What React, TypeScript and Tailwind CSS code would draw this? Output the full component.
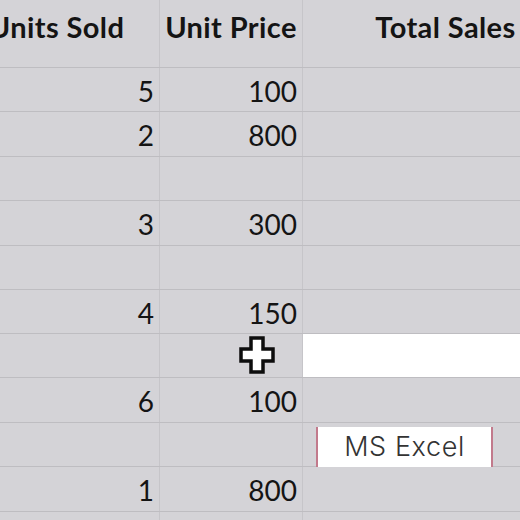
const rows = [
  { h: 'h-[44px]', units: '5', price: '100' },
  { h: 'h-[45px]', units: '2', price: '800' },
  { h: 'h-[44px]', units: '', price: '' },
  { h: 'h-[45px]', units: '3', price: '300' },
  { h: 'h-[44px]', units: '', price: '' },
  { h: 'h-[44px]', units: '4', price: '150' },
  { h: 'h-[44px]', units: '', price: '', selected: true },
  { h: 'h-[45px]', units: '6', price: '100' },
  { h: 'h-[44px]', units: '', price: '' },
  { h: 'h-[45px]', units: '1', price: '800' },
  { h: 'h-[44px]', units: '', price: '' },
];

const Cursor = () => (
  <svg width="38" height="40" viewBox="0 0 38 40" className="absolute left-[238px] top-[335px]">
    <path
      d="M13 3 H25 V14 H35 V26 H25 V37 H13 V26 H3 V14 H13 Z"
      fill="#fff"
      stroke="#0d0d0d"
      strokeWidth="3.5"
      strokeLinejoin="miter"
    />
  </svg>
);

export default function App() {
  return (
    <div className="relative w-[520px] h-[520px] overflow-hidden bg-[#d4d3d7] text-[#141414] font-['Lato',sans-serif]">
      <div className="ml-[-46px] w-[640px]">
        {/* header */}
        <div className="flex h-[68px] border-b border-[#bebdc1] text-[29px] font-bold tracking-[0.4px]">
          <div className="w-[206px] border-r border-[#c6c5c9] flex justify-center pt-[5px]">Units Sold</div>
          <div className="w-[143px] border-r border-[#c6c5c9] flex justify-center pt-[5px]">Unit Price</div>
          <div className="w-[285px] flex justify-center pt-[5px]">Total Sales</div>
        </div>

        {rows.map((r, i) => (
          <div key={i} className={`flex ${r.h} border-b border-[#bebdc1] text-[28px]`}>
            <div className="w-[206px] border-r border-[#c6c5c9] flex items-center justify-end pr-[5px] pt-[2px]">
              {r.units}
            </div>
            <div className="w-[143px] border-r border-[#c6c5c9] flex items-center justify-end pr-[5px] pt-[2px]">
              {r.price}
            </div>
            <div className={`w-[285px] ${r.selected ? 'bg-white' : ''}`}></div>
          </div>
        ))}
      </div>

      <Cursor />

      {/* caption box */}
      <div className="absolute left-[316px] top-[427px] w-[177px] h-[40px] bg-white border-x-2 border-[#c27a8c] flex items-center justify-center text-[27px] text-[#333] font-['Inter',sans-serif] font-light tracking-[0.6px]">
        MS Excel
      </div>
    </div>
  );
}
